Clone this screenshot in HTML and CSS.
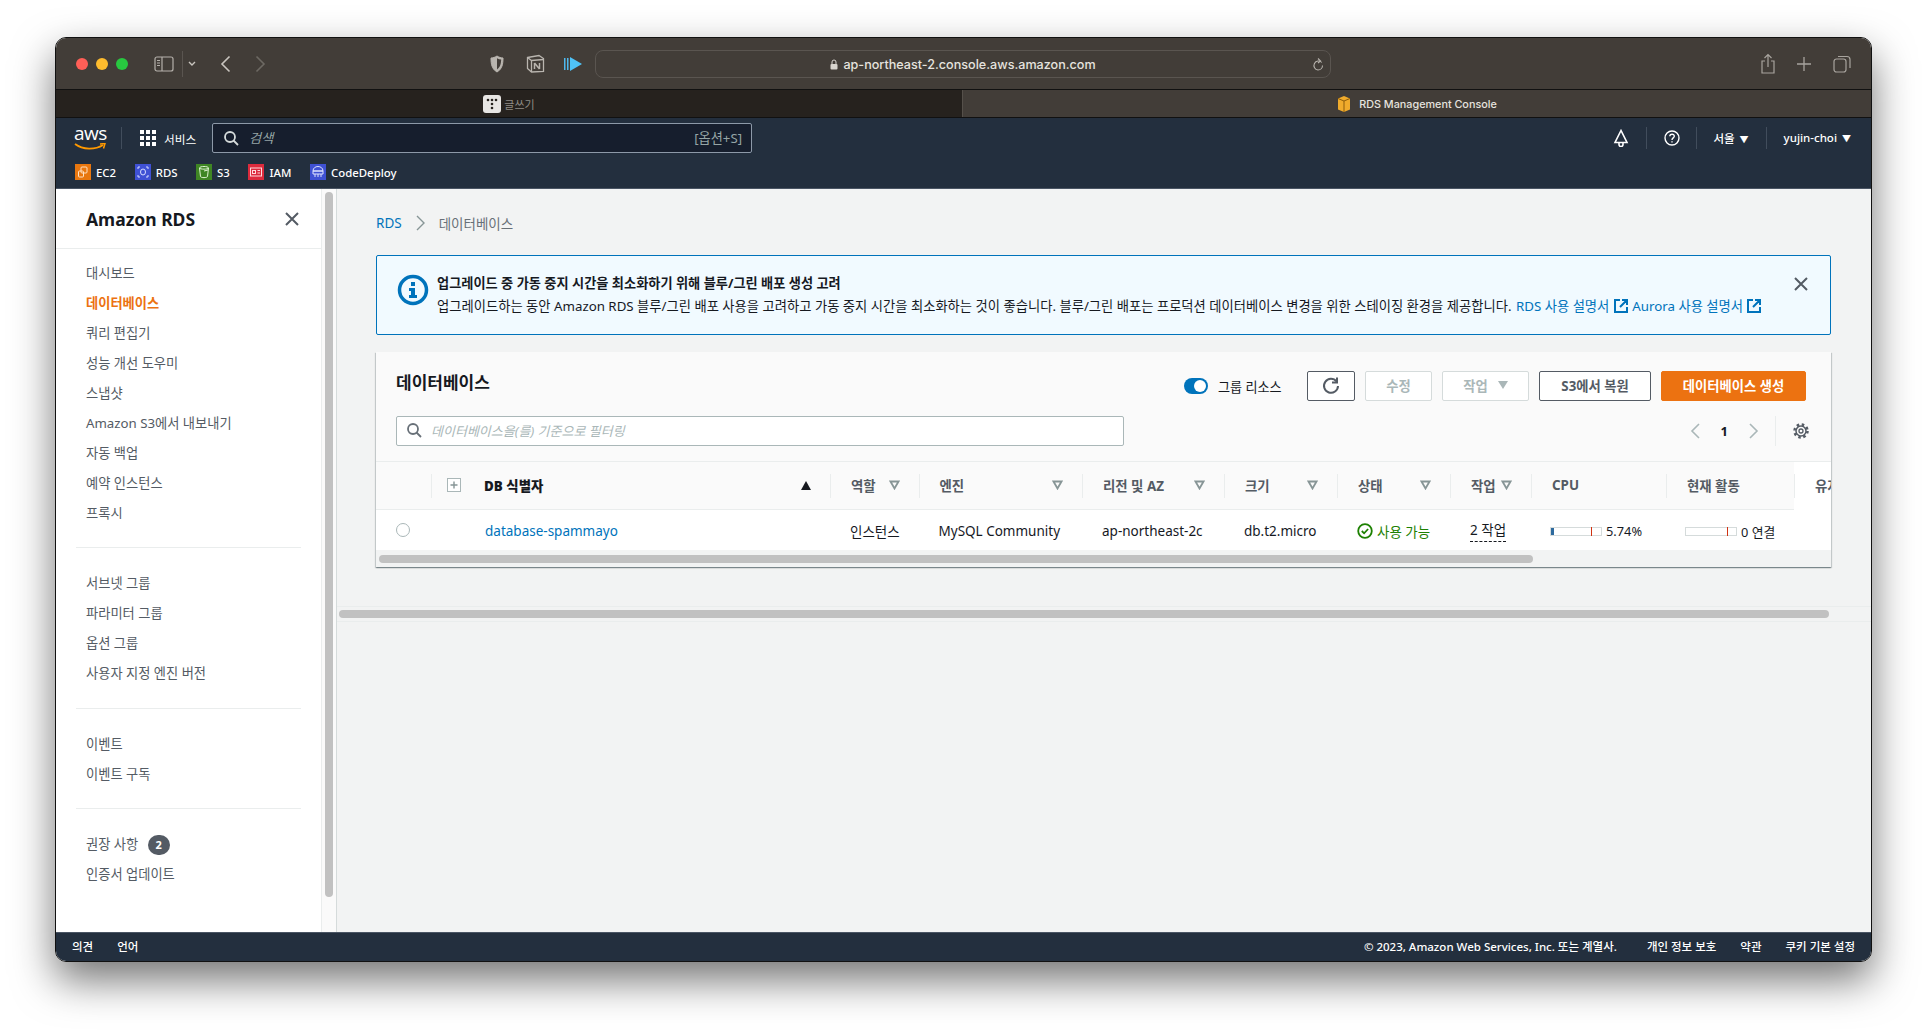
FILE: index.html
```html
<!DOCTYPE html>
<html lang="ko">
<head>
  <meta charset="UTF-8" />
  <title>RDS Management Console</title>
  <link rel="stylesheet" href="styles.css">
</head>
<body>

<div class="window">
  <!-- browser chrome -->
  <div class="titlebar">
    <span class="light red"></span><span class="light yellow"></span><span class="light green"></span>
    <svg class="sidebar-btn" width="20" height="16" viewBox="0 0 20 16" fill="none" stroke="#b5b1ab" stroke-width="1.2"><rect x="1" y="1" width="18" height="14" rx="2"/><path d="M8 1v14M3 4.5h3M3 7h3M3 9.500h3"/></svg>
    <span class="tb-sep"></span>
    <svg class="tb-chev" width="8" height="6" viewBox="0 0 8 6" fill="none" stroke="#c9c5bf" stroke-width="1.400"><path d="M1 1l3 3 3-3"/></svg>
    <svg class="tb-back" width="11" height="18" viewBox="0 0 11 18" fill="none" stroke="#c9c5bf" stroke-width="1.600"><path d="M9.500 1.500L2 9l7.500 7.500"/></svg>
    <svg class="tb-fwd" width="11" height="18" viewBox="0 0 11 18" fill="none" stroke="#6d6963" stroke-width="1.600"><path d="M1.500 1.500L9 9l-7.500 7.500"/></svg>
    <svg class="ext-shield" width="14" height="18" viewBox="0 0 14 18"><path d="M7 1C5 2.300 3 3 1 3c0 6 .8 11 6 14 5.200-3 6-8 6-14-2 0-4-.7-6-2z" fill="#b9b5af" stroke="#b9b5af"/><path d="M7 3.200v11.400c3.200-2.200 4-5.800 4.200-10-1.500-.2-2.900-.7-4.200-1.400z" fill="#423d38"/></svg>
    <svg class="ext-notion" width="19" height="19" viewBox="0 0 19 19" fill="none" stroke="#b9b5af" stroke-width="1.300"><path d="M1.500 3.500L13 1.500l4.500 3v13l-12 .5-4-3.500z"/><path d="M1.500 3.500l4 3 12-1M5.500 6.500V18"/><path d="M8.500 9v6M8.500 9l5 6M13.500 9v6" stroke-width="1.500"/></svg>
    <svg class="ext-play" width="19" height="16" viewBox="0 0 19 16"><path d="M0 2h1.500v12H0zM3 2h1.500v12H3z" fill="#4fb8ec"/><path d="M6 1l12 7-12 7z" fill="#4fc3f7"/></svg>
    <div class="urlbar">
      <svg width="8" height="11" viewBox="0 0 8 11"><path d="M2 5V3a2 2 0 014 0v2" fill="none" stroke="#d8d4ce"/><rect x="0.500" y="5" width="7" height="5.500" rx="1" fill="#d8d4ce"/></svg>
      <span class="url-text">ap-northeast-2.console.aws.amazon.com</span>
      <svg class="reload" width="12" height="14" viewBox="0 0 12 14" fill="none" stroke="#b5b1ab" stroke-width="1.100"><path d="M9.800 4.500A4.500 4.500 0 106 12a4.500 4.500 0 004.500-4.500"/><path d="M6 .5l2.500 2.500L6 5"/></svg>
    </div>
    <svg class="tb-share" width="16" height="22" viewBox="0 0 16 22" fill="none" stroke="#a8a49e" stroke-width="1.200"><path d="M5 8H2v12h12V8h-3M8 14V1.500M4.500 5L8 1.500 11.500 5"/></svg>
    <svg class="tb-plus" width="14" height="14" viewBox="0 0 14 14" stroke="#a8a49e" stroke-width="1.300"><path d="M7 0v14M0 7h14"/></svg>
    <svg class="tb-tabs" width="18" height="18" viewBox="0 0 18 18" fill="none" stroke="#a8a49e" stroke-width="1.200"><rect x="1" y="4" width="12" height="13" rx="2.500"/><path d="M5 1.500h9a3 3 0 013 3V13"/></svg>
  </div>
  <div class="tabs">
    <div class="tab tab-off">
      <svg width="18" height="18" viewBox="0 0 18 18"><rect width="18" height="18" rx="3" fill="#e8e6e3"/><g fill="#26221e"><circle cx="5" cy="5" r="1.300"/><circle cx="9" cy="5" r="1.300"/><circle cx="13" cy="5" r="1.300"/><circle cx="9" cy="9" r="1.300"/><circle cx="9" cy="13" r="1.300"/></g></svg>
      <span>글쓰기</span>
    </div>
    <div class="tab tab-on">
      <svg width="14" height="16" viewBox="0 0 14 16"><path d="M7 0l6 2.500v11L7 16l-6-2.500v-11z" fill="#f0ab2c"/><path d="M7 5v11M1 2.500L7 5l6-2.500" fill="none" stroke="#8d5d0c"/></svg>
      <span>RDS Management Console</span>
    </div>
  </div>

  <!-- aws nav -->
  <div class="nav">
    <div class="nav-top">
      <div class="aws-logo">
        <span>aws</span>
        <svg width="32" height="8" viewBox="0 0 32 8" fill="none"><path d="M1 1c8 6 20 6 28 1" stroke="#ff9900" stroke-width="1.800"/><path d="M26 1l5-.5-1.500 5" stroke="#ff9900" stroke-width="1.500"/></svg>
      </div>
      <span class="nav-sep first"></span>
      <svg class="grid-icon" width="16" height="16" viewBox="0 0 16 16" fill="#fff"><rect width="4" height="4"/><rect x="6" width="4" height="4"/><rect x="12" width="4" height="4"/><rect y="6" width="4" height="4"/><rect x="6" y="6" width="4" height="4"/><rect x="12" y="6" width="4" height="4"/><rect y="12" width="4" height="4"/><rect x="6" y="12" width="4" height="4"/><rect x="12" y="12" width="4" height="4"/></svg>
      <span class="services">서비스</span>
      <div class="nav-search">
        <svg width="15" height="15" viewBox="0 0 15 15" fill="none" stroke="#d5dbdb" stroke-width="1.800"><circle cx="6" cy="6" r="5"/><path d="M9.500 9.500L14 14"/></svg>
        <span class="ph">검색</span>
        <span class="hint">[옵션+S]</span>
      </div>
      <div class="nav-right">
        <svg class="nav-bell" width="16" height="18" viewBox="0 0 16 18" fill="none" stroke="#fff" stroke-width="1.600"><path d="M8 1.500L2 13.500h12z"/><path d="M6 14v1.500a2 2 0 004 0V14"/></svg>
        <span class="nav-sep"></span>
        <svg class="nav-help" width="16" height="16" viewBox="0 0 16 16" fill="none" stroke="#fff" stroke-width="1.400"><circle cx="8" cy="8" r="7"/><path d="M5.800 6.200C6 3.500 10.400 3.600 10.300 6.300 10.200 8 8 7.900 8 10"/><path d="M8 11.200v1.300"/></svg>
        <span class="nav-sep"></span>
        <span class="nav-menu region">서울 <i>▼</i></span>
        <span class="nav-sep"></span>
        <span class="nav-menu user">yujin-choi <i>▼</i></span>
      </div>
    </div>
    <div class="shortcuts">
      <span class="shortcut"><svg width="16" height="16" viewBox="0 0 16 16"><rect width="16" height="16" fill="#e8770f"/><g fill="none" stroke="#ffe2c4"><rect x="6" y="3" width="6" height="6" rx="1"/><rect x="3.500" y="7" width="5" height="6" rx="1"/></g></svg>EC2</span>
      <span class="shortcut"><svg width="16" height="16" viewBox="0 0 16 16"><rect width="16" height="16" fill="#3f51d4"/><g fill="none" stroke="#d6dcff"><ellipse cx="8" cy="8" rx="2.500" ry="3"/><path d="M3 5V3h2M13 5V3h-2M3 11v2h2M13 11v2h-2"/></g></svg>RDS</span>
      <span class="shortcut"><svg width="16" height="16" viewBox="0 0 16 16"><rect width="16" height="16" fill="#3f8624"/><g fill="none" stroke="#dff3d2"><path d="M3.500 4c0-2 9-2 9 0l-1 8.500c-.3 1.500-6.700 1.500-7 0z"/><path d="M3.500 4c0 1.500 9 1.500 9 0M8 7l4-1"/></g></svg>S3</span>
      <span class="shortcut"><svg width="16" height="16" viewBox="0 0 16 16"><rect width="16" height="16" fill="#dd2b3d"/><g fill="none" stroke="#ffd9dc"><rect x="2.500" y="4" width="11" height="8"/><rect x="4.500" y="6.500" width="3" height="3"/><path d="M9.500 6.500h2.500M9.500 9h2.500"/></g></svg>IAM</span>
      <span class="shortcut"><svg width="16" height="16" viewBox="0 0 16 16"><rect width="16" height="16" fill="#3f51d4"/><g fill="none" stroke="#dfe3ff"><path d="M3 7c0-6 10-6 10 0zM3 7h10v3H3zM5 10v3M8 10v3M11 10v3"/></g></svg>CodeDeploy</span>
    </div>
  </div>

  <div class="body">
    <!-- side navigation -->
    <aside class="sidebar">
      <div class="side-head">
        <span>Amazon RDS</span>
        <svg width="14" height="14" viewBox="0 0 14 14" stroke="#545b64" stroke-width="2"><path d="M1 1l12 12M13 1L1 13"/></svg>
      </div>
      <ul class="side-list first">
        <li>대시보드</li>
        <li class="active">데이터베이스</li>
        <li>쿼리 편집기</li>
        <li>성능 개선 도우미</li>
        <li>스냅샷</li>
        <li>Amazon S3에서 내보내기</li>
        <li>자동 백업</li>
        <li>예약 인스턴스</li>
        <li>프록시</li>
      </ul>
      <ul class="side-list">
        <li>서브넷 그룹</li>
        <li>파라미터 그룹</li>
        <li>옵션 그룹</li>
        <li>사용자 지정 엔진 버전</li>
      </ul>
      <ul class="side-list short">
        <li>이벤트</li>
        <li>이벤트 구독</li>
      </ul>
      <ul class="side-list last">
        <li>권장 사항 <span class="badge">2</span></li>
        <li>인증서 업데이트</li>
      </ul>
    </aside>
    <div class="side-scroll"><div class="side-thumb"></div></div>

    <main class="main">
      <div class="crumbs">
        <a>RDS</a>
        <svg width="11" height="16" viewBox="0 0 11 16" fill="none" stroke="#879596" stroke-width="1.400"><path d="M2 1l7 7-7 7"/></svg>
        <span>데이터베이스</span>
      </div>

      <div class="alert">
        <svg class="alert-icon" width="32" height="32" viewBox="0 0 32 32"><circle cx="16" cy="16" r="13.500" fill="none" stroke="#0073bb" stroke-width="3.500"/><path d="M14 8h4v4h-4zM12 14h6v7h2v3h-8v-3h2v-4h-2z" fill="#0073bb"/></svg>
        <div class="alert-text">
          <div class="alert-title">업그레이드 중 가동 중지 시간을 최소화하기 위해 블루/그린 배포 생성 고려</div>
          <div class="alert-body">업그레이드하는 동안 Amazon RDS 블루/그린 배포 사용을 고려하고 가동 중지 시간을 최소화하는 것이 좋습니다. 블루/그린 배포는 프로덕션 데이터베이스 변경을 위한 스테이징 환경을 제공합니다. <a>RDS 사용 설명서 <svg width="14" height="14" viewBox="0 0 14 14" fill="none" stroke="#0073bb" stroke-width="2"><path d="M6 1H1v12h12V8M8 1h5v5M13 1L6 8"/></svg></a> <a>Aurora 사용 설명서 <svg width="14" height="14" viewBox="0 0 14 14" fill="none" stroke="#0073bb" stroke-width="2"><path d="M6 1H1v12h12V8M8 1h5v5M13 1L6 8"/></svg></a></div>
        </div>
        <svg class="alert-close" width="14" height="14" viewBox="0 0 14 14" stroke="#545b64" stroke-width="2"><path d="M1 1l12 12M13 1L1 13"/></svg>
      </div>

      <section class="panel">
        <div class="panel-head">
          <div class="panel-row">
            <h2>데이터베이스</h2>
            <span class="toggle"></span>
            <span class="toggle-label">그룹 리소스</span>
            <button class="btn btn-icon"><svg width="18" height="18" viewBox="0 0 18 18" fill="none" stroke="#545b64" stroke-width="2"><path d="M14.500 4.500A7 7 0 1016 9"/><path d="M15 .5v5h-5"/></svg></button>
            <button class="btn btn-off btn-edit">수정</button>
            <button class="btn btn-off btn-act">작업 <i class="tri-off"></i></button>
            <button class="btn btn-restore">S3에서 복원</button>
            <button class="btn btn-primary">데이터베이스 생성</button>
          </div>
          <div class="panel-row row-filter">
            <div class="filter">
              <svg width="15" height="15" viewBox="0 0 15 15" fill="none" stroke="#687078" stroke-width="1.800"><circle cx="6" cy="6" r="5"/><path d="M9.500 9.500L14 14"/></svg>
              <span>데이터베이스을(를) 기준으로 필터링</span>
            </div>
            <div class="pager">
              <svg width="10" height="16" viewBox="0 0 10 16" fill="none" stroke="#aab7b8" stroke-width="1.600"><path d="M9 1L2 8l7 7"/></svg>
              <b>1</b>
              <svg width="10" height="16" viewBox="0 0 10 16" fill="none" stroke="#aab7b8" stroke-width="1.600"><path d="M1 1l7 7-7 7"/></svg>
              <span class="pager-sep"></span>
              <svg width="16" height="16" viewBox="0 0 16 16" fill="none" stroke="#545b64"><circle cx="8" cy="8" r="5" stroke-width="1.500"/><circle cx="8" cy="8" r="2" stroke-width="1.300"/><circle cx="8" cy="8" r="6.500" stroke-width="2.500" stroke-dasharray="2.500 2.600"/></svg>
            </div>
          </div>
        </div>

        <div class="table">
          <div class="grid thead">
            <div></div>
            <div class="th th-id"><svg width="14" height="14" viewBox="0 0 14 14"><rect x="0.500" y="0.500" width="13" height="13" fill="#fff" stroke="#aab7b8"/><path d="M7 3.500v7M3.500 7h7" stroke="#879596" stroke-width="1.400"/></svg><b>DB 식별자</b><i class="tri-sort"></i></div>
            <div class="th"><span>역할</span><svg class="tri-filter" width="11" height="10" viewBox="0 0 11 10"><path d="M1.500 1.500h8l-4 7z"/></svg></div>
            <div class="th"><span>엔진</span><svg class="tri-filter" width="11" height="10" viewBox="0 0 11 10"><path d="M1.500 1.500h8l-4 7z"/></svg></div>
            <div class="th"><span>리전 및 AZ</span><svg class="tri-filter" width="11" height="10" viewBox="0 0 11 10"><path d="M1.500 1.500h8l-4 7z"/></svg></div>
            <div class="th"><span>크기</span><svg class="tri-filter" width="11" height="10" viewBox="0 0 11 10"><path d="M1.500 1.500h8l-4 7z"/></svg></div>
            <div class="th"><span>상태</span><svg class="tri-filter" width="11" height="10" viewBox="0 0 11 10"><path d="M1.500 1.500h8l-4 7z"/></svg></div>
            <div class="th"><span>작업</span><svg class="tri-filter" width="11" height="10" viewBox="0 0 11 10"><path d="M1.500 1.500h8l-4 7z"/></svg></div>
            <div class="th"><span>CPU</span></div>
            <div class="th"><span>현재 활동</span></div>
            <div class="th"><span>유지 관리</span></div>
          </div>
          <div class="grid trow">
            <div class="td td-radio"><span class="radio"></span></div>
            <div class="td td-id"><a>database-spammayo</a></div>
            <div class="td">인스턴스</div>
            <div class="td">MySQL Community</div>
            <div class="td">ap-northeast-2c</div>
            <div class="td">db.t2.micro</div>
            <div class="td td-status"><svg width="16" height="16" viewBox="0 0 16 16" fill="none" stroke="#1d8102" stroke-width="1.800"><circle cx="8" cy="8" r="6.800"/><path d="M4.800 8l2.300 2.300 4-4.300"/></svg>사용 가능</div>
            <div class="td"><span class="dashed">2 작업</span></div>
            <div class="td td-bar"><span class="bar"><span class="bar-fill"></span><span class="bar-tick tick-cpu"></span></span>5.74%</div>
            <div class="td td-bar"><span class="bar"><span class="bar-tick tick-conn"></span></span>0 연결</div>
            <div class="td"></div>
          </div>
        </div>
        <div class="table-scroll"><div class="table-thumb"></div></div>
      </section>

      <div class="page-scroll"><div class="page-thumb"></div></div>
    </main>
  </div>

  <footer class="footer">
    <span class="fb">의견</span>
    <span>언어</span>
    <span class="copy">© 2023, Amazon Web Services, Inc. 또는 계열사.</span>
    <span>개인 정보 보호</span>
    <span>약관</span>
    <span>쿠키 기본 설정</span>
  </footer>
</div>

</body>
</html>
```

FILE: styles.css
```css
* {
  box-sizing: border-box;
}
html, body {
  margin: 0;
  height: 100%;
}
body {
  background: #fff;
  padding: 37px 55px 0;
  font-family: "Noto Sans", "Noto Sans CJK KR", sans-serif;
  font-size: 14px;
  color: #16191f;
  overflow: hidden;
}
ul {
  list-style: none;
  margin: 0;
  padding: 0;
}
.window {
  width: 1817px;
  height: 925px;
  display: flex;
  flex-direction: column;
  border: 1px solid #111;
  border-radius: 11px;
  overflow: hidden;
  box-shadow: 0 18px 42px rgba(0, 0, 0, 0.55);
}

/* Browser chrome */
.titlebar {
  height: 52px;
  flex: none;
  background: #423d38;
  border-bottom: 1px solid #111;
  display: flex;
  align-items: center;
  padding-left: 20px;
}
.light {
  width: 12px;
  height: 12px;
  border-radius: 50%;
  margin-right: 8px;
}
.red { background: #ff5f57; }
.yellow { background: #febc2e; }
.green { background: #28c840; }
.sidebar-btn { margin-left: 18px; }
.tb-sep {
  width: 1px;
  height: 26px;
  background: #5a5550;
  margin-left: 8px;
}
.tb-chev { margin-left: 5px; }
.tb-back { margin-left: 24px; }
.tb-fwd { margin-left: 24px; }
.ext-shield { margin-left: 223.5px; }
.ext-notion { margin-left: 22px; }
.ext-play { margin-left: 19px; }
.urlbar {
  width: 736px;
  height: 28px;
  margin-left: 12.5px;
  border: 1px solid #5a5550;
  border-radius: 8px;
  display: flex;
  align-items: center;
  justify-content: center;
  gap: 5px;
  color: #e6e3df;
  font-family: Inter, "Noto Sans", sans-serif;
  font-size: 12.6px;
  font-weight: 500;
  padding-top: 1px;
  position: relative;
}
.reload {
  position: absolute;
  right: 6px;
  top: 7px;
}
.tb-share { margin-left: 429px; }
.tb-plus { margin-left: 21px; }
.tb-tabs { margin-left: 22px; }
.tabs {
  height: 28px;
  flex: none;
  display: flex;
  border-bottom: 1px solid #111;
  font-size: 11px;
}
.tab {
  display: flex;
  align-items: center;
  justify-content: center;
  gap: 3px;
  height: 100%;
}
.tab-off {
  width: 907px;
  background: #26221e;
  color: #8f8b85;
  border-right: 1px solid #55504a;
}
.tab-on {
  flex: 1;
  background: #423d38;
  color: #e6e3df;
  font-size: 10.8px;
  font-weight: 500;
  font-family: Inter, "Noto Sans", sans-serif;
  padding-top: 1px;
}
.tab-on svg { margin-right: 5px; }

/* AWS nav */
.nav {
  height: 71px;
  flex: none;
  background: #232f3e;
  border-bottom: 1px solid #4a5564;
  color: #fff;
  padding: 5px 0 0 18px;
}
.nav-top {
  display: flex;
  align-items: center;
  height: 30px;
}
.aws-logo {
  width: 32px;
  height: 26px;
  position: relative;
  font-family: "Open Sans", sans-serif;
  font-size: 19px;
  line-height: 17px;
  letter-spacing: -0.5px;
}
.aws-logo svg {
  position: absolute;
  left: 0;
  bottom: 0;
}
.nav-sep {
  width: 1px;
  height: 22px;
  background: #414d5c;
}
.nav-sep.first { margin-left: 15px; }
.grid-icon { margin-left: 18px; }
.services {
  margin-left: 8px;
  font-size: 11.7px;
  width: 48px;
}
.nav-search {
  width: 540px;
  height: 30px;
  background: #161e2d;
  border: 1px solid #8d99a8;
  border-radius: 2px;
  display: flex;
  align-items: center;
  padding: 0 9px 2px 11px;
  color: #95a5a6;
  font-size: 13.2px;
}
.nav-search svg { margin-top: 2px; }
.ph {
  margin-left: 10px;
  font-style: italic;
}
.hint { margin-left: auto; }
.nav-right {
  margin-left: auto;
  display: flex;
  align-items: center;
  font-size: 11.5px;
  font-weight: 500;
  padding-bottom: 1px;
}
.nav-bell { margin-right: 17px; }
.nav-help { margin: 0 16px 0 17px; }
.nav-menu i {
  font-style: normal;
  font-size: 9px;
  margin-left: 2px;
}
.region { margin: 0 17px 0 16px; }
.user { margin: 0 20px 0 17px; }
.shortcuts {
  display: flex;
  align-items: center;
  gap: 18.6px;
  margin: 8px 0 0 1px;
  height: 22px;
  font-size: 11.4px;
  font-weight: 500;
}
.shortcut {
  display: flex;
  align-items: center;
  gap: 5px;
}

/* Layout under the nav */
.body {
  flex: 1;
  min-height: 0;
  display: flex;
  background: #f2f3f3;
}
.sidebar {
  width: 265px;
  flex: none;
  background: #fff;
  color: #545b64;
  font-size: 13.25px;
}
.side-head {
  height: 60px;
  padding: 0 22px 0 30px;
  border-bottom: 1px solid #eaeded;
  display: flex;
  align-items: center;
  justify-content: space-between;
  color: #16191f;
  font-size: 17.5px;
  font-weight: 700;
}
.side-list {
  margin: 0 20px;
  padding: 20px 0 20px 10px;
  border-bottom: 1px solid #eaeded;
}
.side-list.first { padding-top: 9px; padding-bottom: 19px; }
.side-list.short { padding-bottom: 19px; }
.side-list.last { border-bottom: 0; }
.side-list li {
  height: 30px;
  line-height: 30px;
}
.side-list .active {
  color: #ec7211;
  font-weight: 700;
}
.badge {
  display: inline-block;
  width: 22px;
  height: 20px;
  margin-left: 6px;
  border-radius: 10px;
  background: #545b64;
  color: #fff;
  font-size: 11px;
  font-weight: 700;
  line-height: 20px;
  text-align: center;
}
.side-scroll {
  width: 16px;
  flex: none;
  background: #fafafa;
  border-left: 1px solid #eaeded;
  border-right: 1px solid #d5dbdb;
  padding: 3px 3px 0;
}
.side-thumb {
  height: 705px;
  background: #c1c1c1;
  border-radius: 4px;
}
.main {
  flex: 1;
  min-width: 0;
  padding: 24px 40px 0 39px;
}
.crumbs {
  height: 20px;
  display: flex;
  align-items: center;
  gap: 13px;
  font-size: 13.5px;
  color: #687078;
}
.crumbs a { color: #0073bb; }

/* Info banner */
.alert {
  height: 80px;
  margin-top: 22px;
  background: #f1faff;
  border: 1px solid #0073bb;
  border-radius: 2px;
  display: flex;
  align-items: flex-start;
  padding: 17px 0 0 20px;
  position: relative;
}
.alert-icon {
  flex: none;
  margin-top: 1px;
  margin-right: 8px;
}
.alert-title {
  font-size: 13.2px;
  font-weight: 700;
  line-height: 21px;
}
.alert-body {
  font-size: 13.3px;
  line-height: 24px;
  white-space: nowrap;
}
.alert-body a { color: #0073bb; margin-left: 1px; }
.alert-body svg { vertical-align: -2px; margin-left: 1px; }
.alert-close {
  position: absolute;
  right: 22px;
  top: 21px;
}

/* Database panel */
.panel {
  margin-top: 17px;
  background: #fff;
  box-shadow: 0 1px 1px rgba(0, 28, 36, 0.3), 1px 1px 1px rgba(0, 28, 36, 0.15), -1px 1px 1px rgba(0, 28, 36, 0.15);
}
.panel-head {
  height: 110px;
  background: #fafafa;
  padding: 19px 25px 0 20px;
  border-bottom: 1px solid #eaeded;
}
.panel-row {
  display: flex;
  align-items: center;
  height: 30px;
}
.panel-row h2 {
  margin: 0 0 10px;
  font-size: 17px;
  font-weight: 700;
  width: 788px;
}
.toggle {
  width: 24px;
  height: 16px;
  border-radius: 8px;
  background: #0073bb;
  position: relative;
}
.toggle::after {
  content: "";
  position: absolute;
  right: 2px;
  top: 2px;
  width: 12px;
  height: 12px;
  border-radius: 50%;
  background: #fff;
}
.toggle-label {
  margin-left: 10px;
  width: 89px;
  font-size: 13.1px;
}
.btn {
  height: 30px;
  margin-right: 10px;
  border: 1px solid #545b64;
  border-radius: 2px;
  background: #fff;
  color: #545b64;
  font-family: inherit;
  font-size: 13.3px;
  font-weight: 700;
  padding: 0 0 2px;
  display: flex;
  align-items: center;
  justify-content: center;
}
.btn-icon { width: 48px; padding: 0; }
.btn-off {
  border-color: #d5dbdb;
  color: #aab7b8;
}
.btn-edit { width: 67px; }
.btn-act { width: 87px; gap: 10px; }
.btn-restore { width: 112px; }
.btn-primary {
  width: 145px;
  margin-right: 0;
  background: #ec7211;
  border-color: #ec7211;
  color: #fff;
}
.tri-off {
  width: 0;
  height: 0;
  border-left: 5.500px solid transparent;
  border-right: 5.500px solid transparent;
  border-top: 8px solid #aab7b8;
}
.row-filter { margin-top: 15px; }
.filter {
  width: 728px;
  height: 30px;
  background: #fff;
  border: 1px solid #aab7b8;
  border-radius: 2px;
  display: flex;
  align-items: center;
  gap: 9px;
  padding: 0 0 1px 10px;
  color: #aab7b8;
  font-size: 13px;
  font-style: italic;
}
.pager {
  margin: 0 -3px 0 auto;
  display: flex;
  align-items: center;
  height: 30px;
  color: #16191f;
}
.pager b {
  font-size: 13px;
  margin: 0 21px;
}
.pager-sep {
  width: 1px;
  height: 30px;
  background: #eaeded;
  margin: 0 17px 0 16px;
}

/* Table */
.table {
  overflow: hidden;
}
.grid {
  display: grid;
  grid-template-columns: 55px 399px 88.500px 163.500px 142px 113px 113px 81px 135px 128px 150px;
  width: 1418px;
  align-items: center;
}
.thead {
  height: 48px;
  background: #fafafa;
  border-bottom: 1px solid #eaeded;
}
.th {
  height: 24px;
  border-left: 1px solid #eaeded;
  display: flex;
  align-items: center;
  justify-content: space-between;
  padding: 0 18px 1px 20px;
  color: #545b64;
  font-size: 13.4px;
  font-weight: 700;
  white-space: nowrap;
}
.th-id {
  padding-left: 15px;
  padding-right: 19px;
  justify-content: flex-start;
  gap: 23px;
  color: #16191f;
}
.tri-sort {
  margin-left: auto;
  width: 0;
  height: 0;
  border-left: 5.500px solid transparent;
  border-right: 5.500px solid transparent;
  border-bottom: 9px solid #16191f;
}
.tri-filter {
  flex: none;
  fill: #fafafa;
  stroke: #879596;
  stroke-width: 1.800;
  margin-right: 1px;
}
.trow {
  height: 40px;
  background: #fff;
  font-size: 13.500px;
  padding-top: 2px;
}
.td {
  padding-left: 20px;
  white-space: nowrap;
}
.td-radio { padding-left: 20px; height: 14px; }
.radio {
  display: block;
  width: 14px;
  height: 14px;
  margin-top: -1px;
  border: 1px solid #aab7b8;
  border-radius: 50%;
}
.td-id { padding-left: 54px; }
.td-id a { color: #0073bb; }
.td-status {
  display: flex;
  align-items: center;
  gap: 4px;
  color: #1d8102;
  padding-left: 20px;
}
.dashed {
  display: inline-block;
  border-bottom: 1px dashed #16191f;
  line-height: 21px;
}
.td-bar {
  display: flex;
  align-items: center;
  gap: 4px;
  padding-left: 19px;
  font-size: 12.8px;
}
.bar {
  width: 52px;
  height: 9px;
  border: 1px solid #d5dbdb;
  position: relative;
  flex: none;
}
.bar-fill {
  position: absolute;
  left: 0;
  top: 0;
  bottom: 0;
  width: 3px;
  background: #2e6a9e;
}
.bar-tick {
  position: absolute;
  top: -1px;
  bottom: -1px;
  width: 1px;
  background: #d13212;
}
.tick-cpu { left: 40px; }
.tick-conn { left: 41px; }
.table-scroll {
  height: 17px;
  background: #f2f3f3;
  padding: 5px 0 0 3px;
}
.table-thumb {
  width: 1154px;
  height: 8px;
  border-radius: 4px;
  background: #c1c1c1;
}
.page-scroll {
  height: 16px;
  margin: 39px -40px 0 -39px;
  border-top: 1px solid #eaeded;
  border-bottom: 1px solid #eaeded;
  padding: 3px 0 0 2px;
}
.page-thumb {
  width: 1490px;
  height: 8px;
  border-radius: 4px;
  background: #c1c1c1;
}

/* Footer */
.footer {
  height: 29px;
  flex: none;
  background: #232f3e;
  border-top: 1px solid #4a5564;
  color: #fff;
  display: flex;
  align-items: center;
  gap: 24px;
  padding: 0 16px 2px;
  font-size: 11.500px;
  font-weight: 500;
}
.copy { margin-left: auto; margin-right: 6px; }
```
